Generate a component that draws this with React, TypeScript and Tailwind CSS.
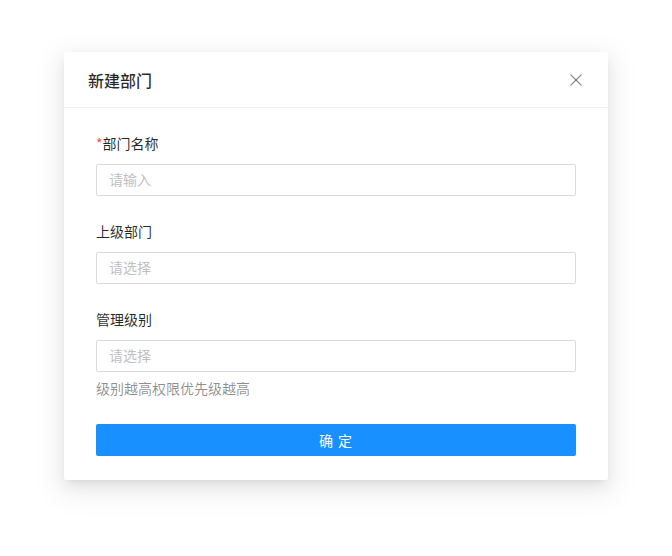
import { X } from "lucide-react";

const font = { fontFamily: '"Noto Sans CJK SC", "Noto Sans", sans-serif' };

function Field({
  label,
  placeholder,
  required,
  help,
}: {
  label: string;
  placeholder: string;
  required?: boolean;
  help?: string;
}) {
  return (
    <div className="mb-6">
      <div className="h-[24px] leading-[22px] mb-2 text-[14px] text-black/85">
        {required && <span className="text-[#ff4d4f]">*</span>}
        {label}
      </div>
      <div className="h-[32px] border border-[#d9d9d9] rounded-[2px] px-[12px] pb-[1px] flex items-center text-[14px] text-[#bfbfbf]">
        {placeholder}
      </div>
      {help && (
        <div className="pt-[5px] leading-[22px] text-[14px] text-black/45">{help}</div>
      )}
    </div>
  );
}

export default function App() {
  return (
    <div className="w-[672px] h-[556px] bg-white pt-[52px] px-[64px]" style={font}>
      <div className="w-[544px] bg-white rounded-[2px] shadow-[0_3px_6px_-4px_rgba(0,0,0,0.12),0_6px_16px_0_rgba(0,0,0,0.08),0_9px_28px_8px_rgba(0,0,0,0.05)]">
        <div className="h-[56px] px-6 flex items-center justify-between border-b border-[#f0f0f0]">
          <div className="text-[16px] font-medium text-black/85">新建部门</div>
          <X className="w-[20px] h-[20px] text-black/45 -mr-[2px]" strokeWidth={1.3} />
        </div>
        <div className="px-8 pt-6 pb-6">
          <Field label="部门名称" placeholder="请输入" required />
          <Field label="上级部门" placeholder="请选择" />
          <Field label="管理级别" placeholder="请选择" help="级别越高权限优先级越高" />
          <button className="w-full h-[32px] mt-[1px] bg-[#1890ff] rounded-[2px] text-white text-[14px] tracking-[1px]">
            确 定
          </button>
        </div>
      </div>
    </div>
  );
}
